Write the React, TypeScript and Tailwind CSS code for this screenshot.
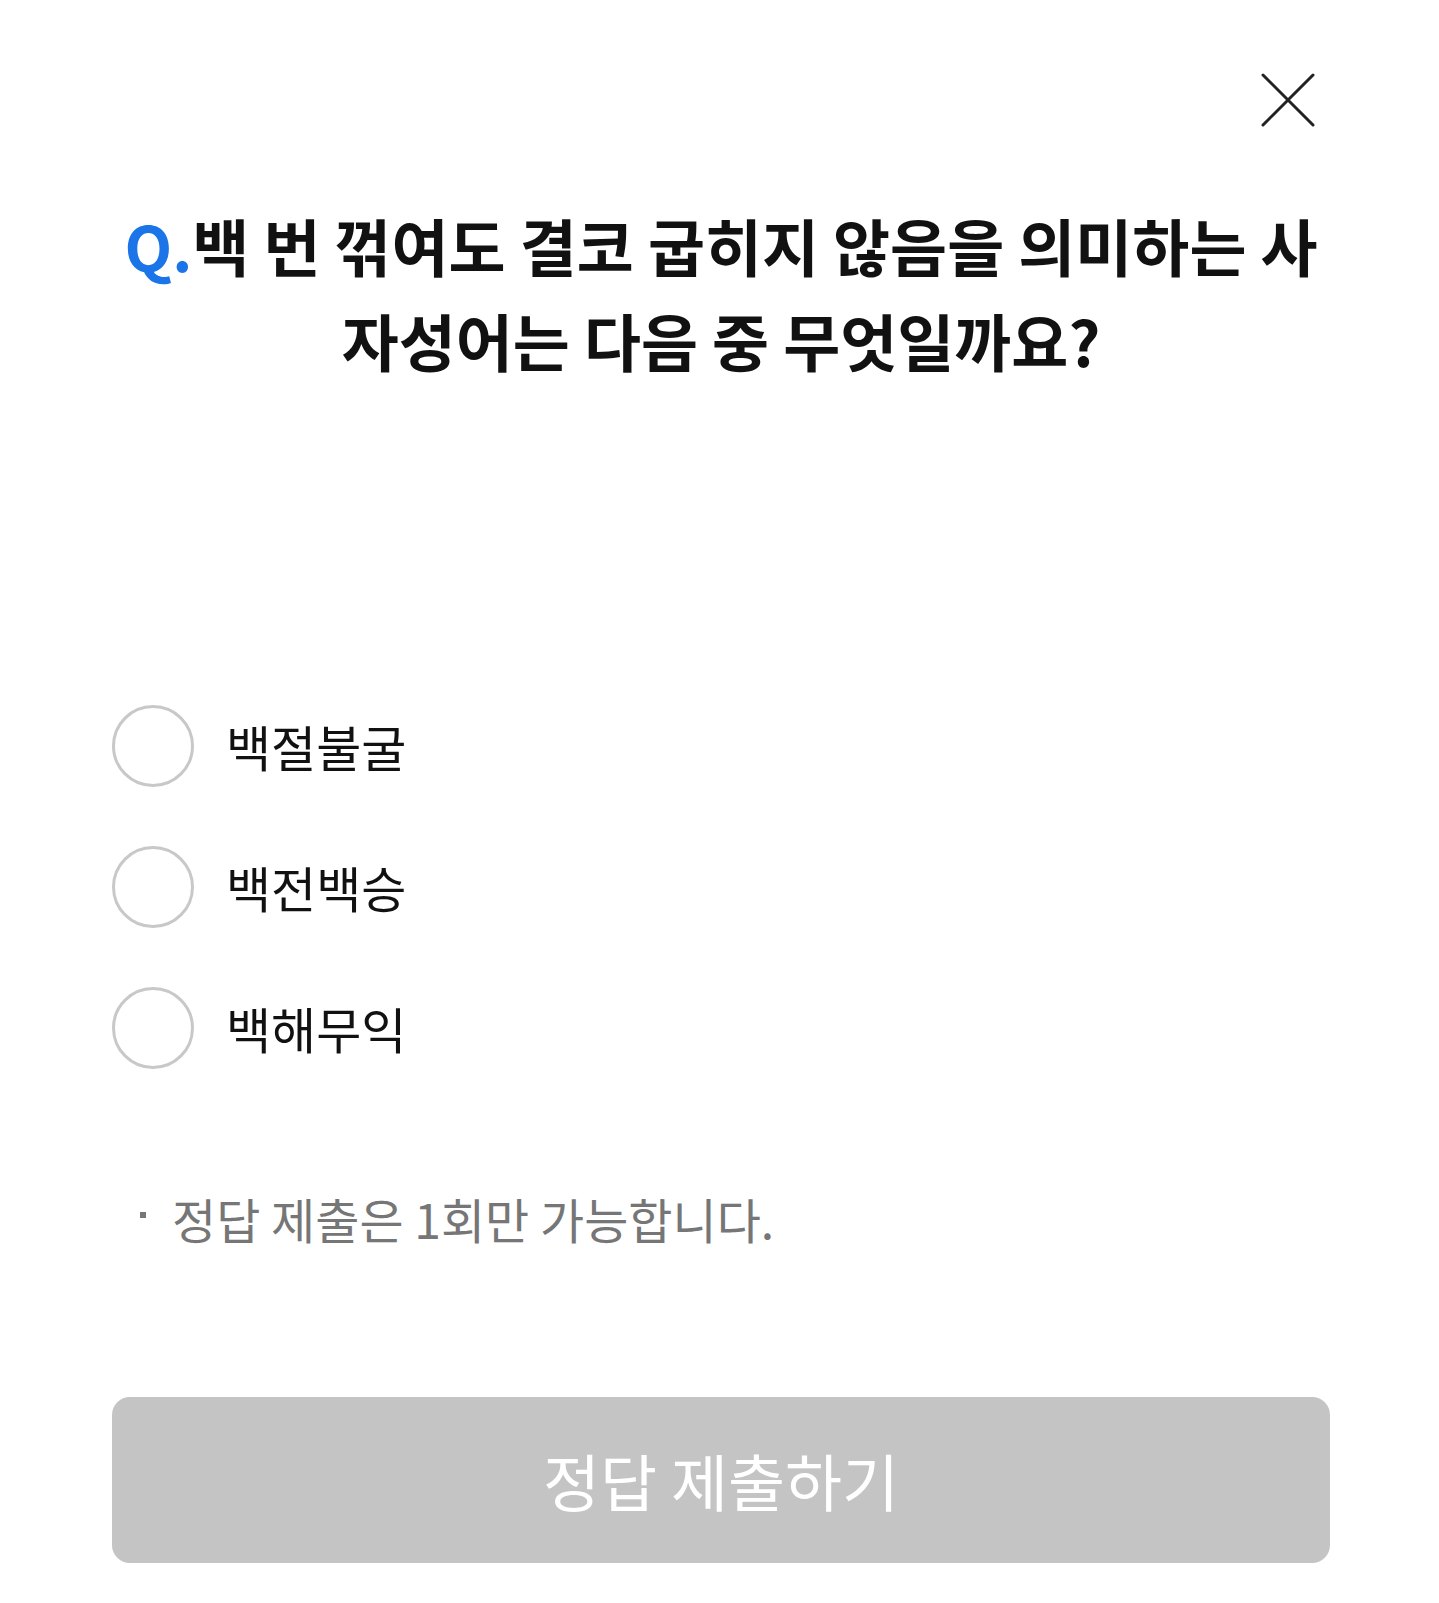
import React from "react";

const options = ["백절불굴", "백전백승", "백해무익"];

export default function App() {
  return (
    <div
      className="w-full min-h-[1603px] bg-white pl-[112px] pr-[109px] flex flex-col"
      style={{ fontFamily: '"Noto Sans CJK KR", "Noto Sans", sans-serif' }}
    >
      <div className="flex justify-end pt-[72px] pr-[14px]">
        <button className="w-[56px] h-[56px]" aria-label="close">
          <svg viewBox="0 0 56 56" width="56" height="56" fill="none">
            <path d="M3 3 L53 53 M53 3 L3 53" stroke="#222222" strokeWidth="3" strokeLinecap="round" />
          </svg>
        </button>
      </div>

      <h1 className="mt-[70px] text-center text-[62px] leading-[95px] font-bold text-[#111111]">
        <span className="block whitespace-nowrap">
          <span className="text-[#1b74e8]">Q.</span>백 번 꺾여도 결코 굽히지 않음을 의미하는 사
        </span>
        <span className="block whitespace-nowrap">자성어는 다음 중 무엇일까요?</span>
      </h1>

      <div className="mt-[317px] flex flex-col gap-[59px]">
        {options.map((o) => (
          <label key={o} className="flex items-center gap-[32px] cursor-pointer">
            <span className="w-[82px] h-[82px] rounded-full border-[3px] border-[#c8c8c8] shrink-0" />
            <span className="text-[49px] leading-[60px] text-[#111111]">{o}</span>
          </label>
        ))}
      </div>

      <div className="mt-[119px] flex items-center h-[60px] pl-[28px]">
        <span className="w-[6px] h-[6px] bg-[#777777] shrink-0 mt-[-6px]" />
        <span className="ml-[26px] text-[48px] leading-[60px] text-[#767676] whitespace-nowrap">
          정답 제출은 1회만 가능합니다.
        </span>
      </div>

      <button className="mt-[149px] h-[166px] w-full rounded-[18px] bg-[#c4c4c4] text-white text-[62px] leading-[70px] flex items-center justify-center">
        정답 제출하기
      </button>
    </div>
  );
}
